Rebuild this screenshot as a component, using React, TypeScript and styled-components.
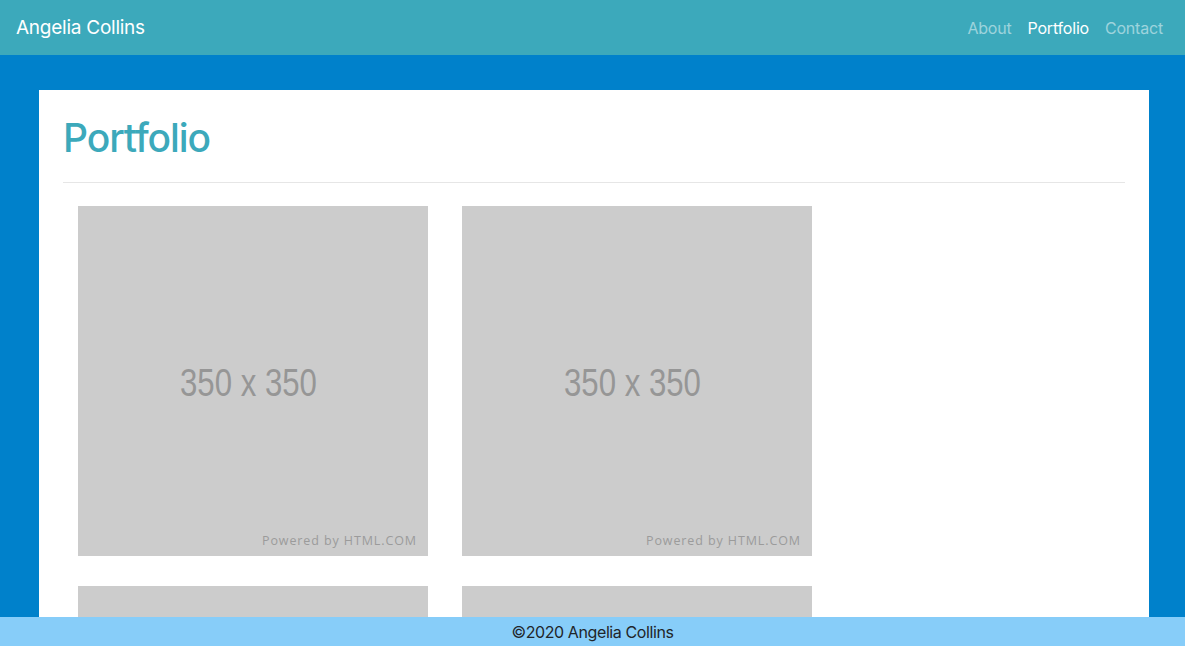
import styled, { createGlobalStyle } from "styled-components";

const GlobalStyle = createGlobalStyle`
  html, body {
    margin: 0;
    padding: 0;
    height: 100%;
    overflow: hidden;
  }
  body {
    background: #0081cb;
    font-family: Inter, "Helvetica Neue", Arial, sans-serif;
    color: #212529;
  }
`;

const Navbar = styled.nav`
  height: 55px;
  background: #3ca9bb;
  display: flex;
  align-items: center;
  justify-content: space-between;
  padding: 0 22px 0 16px;
  box-sizing: border-box;
`;

const Brand = styled.a`
  color: #fff;
  font-size: 19px;
  font-weight: 400;
  text-decoration: none;
  letter-spacing: -0.25px;
`;

const NavLinks = styled.ul`
  list-style: none;
  display: flex;
  gap: 16px;
  margin: 0;
  padding: 0;
`;

const NavLink = styled.a<{ $active?: boolean }>`
  color: ${(p) => (p.$active ? "#fff" : "rgba(255, 255, 255, 0.5)")};
  font-size: 16px;
  text-decoration: none;
  letter-spacing: -0.2px;
`;

const Main = styled.main`
  padding: 35px 36px 0 39px;
`;

const Card = styled.section`
  background: #fff;
  padding: 24px 24px 60px;
  min-height: 700px;
`;

const Title = styled.h1`
  margin: 0;
  font-size: 39px;
  font-weight: 500;
  color: #3ca9bb;
  line-height: 48px;
  letter-spacing: -1.1px;
  padding-bottom: 20px;
  border-bottom: 1px solid #e6e6e6;
`;

const Gallery = styled.div`
  display: flex;
  flex-wrap: wrap;
  gap: 30px 34px;
  padding: 23px 15px 0;
  width: 770px;
`;

const Placeholder = styled.div`
  width: 350px;
  height: 350px;
  background: #cccccc;
  position: relative;
  display: flex;
  align-items: center;
  justify-content: center;
`;

const Size = styled.span`
  font-family: "Liberation Sans", Arial, sans-serif;
  font-size: 38px;
  color: #969696;
  transform: scaleX(0.82);
  margin: 4px 9px 0 0;
`;

const Powered = styled.span`
  position: absolute;
  right: 11px;
  bottom: 7px;
  font-family: "Open Sans", sans-serif;
  font-size: 12.5px;
  letter-spacing: 0.9px;
  color: #9b9b9b;
`;

const Footer = styled.footer`
  position: fixed;
  left: 0;
  right: 0;
  bottom: 0;
  height: 29px;
  background: #87cdf9;
  display: flex;
  align-items: center;
  justify-content: center;
  font-size: 16px;
  color: #212529;
  letter-spacing: -0.4px;
`;

const items = [1, 2, 3, 4];

export default function App() {
  return (
    <>
      <GlobalStyle />
      <Navbar>
        <Brand href="#">Angelia Collins</Brand>
        <NavLinks>
          <li><NavLink href="#">About</NavLink></li>
          <li><NavLink href="#" $active>Portfolio</NavLink></li>
          <li><NavLink href="#">Contact</NavLink></li>
        </NavLinks>
      </Navbar>
      <Main>
        <Card>
          <Title>Portfolio</Title>
          <Gallery>
            {items.map((i) => (
              <Placeholder key={i}>
                <Size>350 x 350</Size>
                <Powered>Powered by HTML.COM</Powered>
              </Placeholder>
            ))}
          </Gallery>
        </Card>
      </Main>
      <Footer>©2020 Angelia Collins</Footer>
    </>
  );
}
